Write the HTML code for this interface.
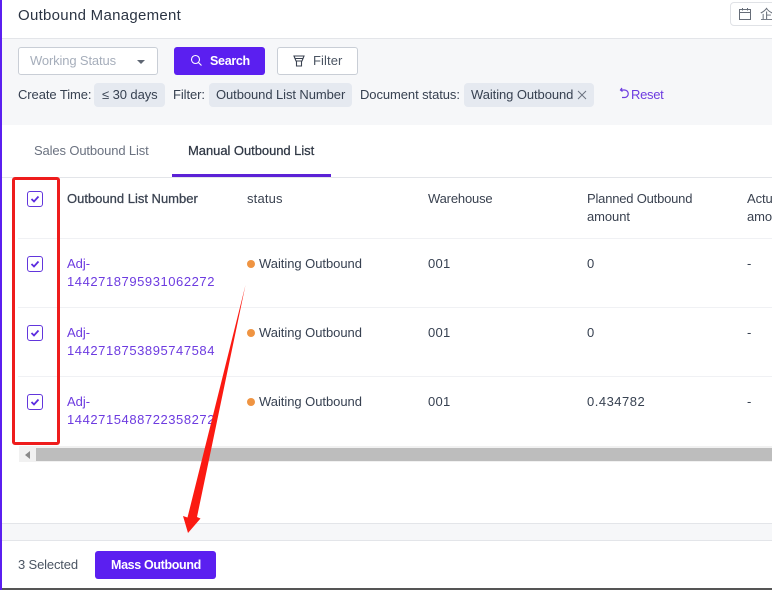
<!DOCTYPE html>
<html><head><meta charset="utf-8">
<style>
html,body{margin:0;padding:0}
body{width:772px;height:590px;overflow:hidden;position:relative;background:#fff;font-family:"Liberation Sans","Noto Sans CJK SC",sans-serif;font-size:13px;color:#374151;letter-spacing:-.08px}
.a{position:absolute;white-space:nowrap;line-height:18px}
.b{position:absolute}
.p{color:#6d3be0}
.m{-webkit-text-stroke:.25px currentColor}
.n{letter-spacing:.25px}
.tag{position:absolute;background:#e5e9f0;border-radius:4px;height:24px;top:83px}
.cb{position:absolute;left:27px;width:14px;height:14px;border:1px solid #6236dc;border-radius:3px;background:#fff}
.cb svg{position:absolute;left:2px;top:2px}
.dot{position:absolute;left:247px;width:8px;height:8px;border-radius:50%;background:#ef9442}
.hl{position:absolute;left:18px;width:754px;height:1px;background:#f0f1f4}
</style></head>
<body>
<!-- page bands -->
<div class="b" style="left:0;top:38px;width:772px;height:87px;background:#f6f7f9;border-top:1px solid #e3e5e9;box-sizing:border-box"></div>
<div class="b" style="left:0;top:0;width:2px;height:590px;background:#5b1ff0;z-index:3"></div>

<!-- header -->
<div class="a" style="left:18px;top:5px;font-size:15px;line-height:21px;color:#2b3443;letter-spacing:.29px">Outbound Management</div>
<div class="b" style="left:730px;top:2px;width:60px;height:24px;border:1px solid #e0e2e6;border-radius:4px;box-sizing:border-box"></div>
<svg class="b" style="left:738px;top:7px" width="14" height="14" viewBox="0 0 14 14" fill="none" stroke="#666d78" stroke-width="1"><rect x="1.5" y="2.5" width="11" height="10"/><path d="M1.5 5.5h11M4.5 1v2.5M9.5 1v2.5"/></svg>
<div class="a" style="left:760px;top:5px;font-size:13px;color:#666d78;font-family:'Noto Sans CJK SC',sans-serif;letter-spacing:0">企</div>

<!-- filter row -->
<div class="b" style="left:18px;top:47px;width:140px;height:28px;background:#fff;border:1px solid #c9ced6;border-radius:3px;box-sizing:border-box"></div>
<div class="a" style="left:30px;top:52px;color:#a6aebb;letter-spacing:-.14px">Working Status</div>
<div class="b" style="left:137px;top:60px;width:0;height:0;border-left:4px solid transparent;border-right:4px solid transparent;border-top:4.5px solid #5e6673"></div>
<div class="b" style="left:174px;top:47px;width:91px;height:28px;background:#5b1ff0;border-radius:3px"></div>
<svg class="b" style="left:190px;top:54px" width="13" height="13" viewBox="0 0 13 13" fill="none" stroke="#fff" stroke-width="1.1"><circle cx="5.5" cy="5.5" r="4"/><path d="M8.5 8.5l3 3"/></svg>
<div class="a" style="left:210px;top:52px;color:#fff;font-weight:bold;font-size:12.5px;letter-spacing:-.3px">Search</div>
<div class="b" style="left:277px;top:47px;width:81px;height:28px;background:#fff;border:1px solid #c9ced6;border-radius:3px;box-sizing:border-box"></div>
<svg class="b" style="left:292px;top:54px" width="14" height="14" viewBox="0 0 14 14" fill="none" stroke="#3a4250" stroke-width="1.1"><path d="M2 2h10L10 7H4ZM3 4.5h8M4.5 7v5h5V7"/></svg>
<div class="a" style="left:313px;top:52px;color:#4b5563;letter-spacing:.1px">Filter</div>

<!-- tags row -->
<div class="a" style="left:18px;top:86px">Create Time:</div>
<div class="tag" style="left:94px;width:71px"></div>
<div class="a" style="left:102px;top:86px">≤ 30 days</div>
<div class="a" style="left:173px;top:86px">Filter:</div>
<div class="tag" style="left:209px;width:143px"></div>
<div class="a" style="left:216px;top:86px">Outbound List Number</div>
<div class="a" style="left:360px;top:86px">Document status:</div>
<div class="tag" style="left:464px;width:130px"></div>
<div class="a" style="left:471px;top:86px">Waiting Outbound</div>
<svg class="b" style="left:577px;top:90px" width="10" height="10" viewBox="0 0 10 10" stroke="#6b7280" stroke-width="1" fill="none"><path d="M1 1l8 8M9 1l-8 8"/></svg>
<svg class="b" style="left:619px;top:87px" width="11" height="13" viewBox="0 0 11 13" fill="none" stroke="#6d3be0" stroke-width="1.2"><path d="M3 1L1.5 3 3.5 4.5M1.5 3h4a3.2 3.2 0 0 1 0 7.5H3"/></svg>
<div class="a p" style="left:631px;top:86px;letter-spacing:-.3px">Reset</div>

<!-- tabs -->
<div class="a" style="left:34px;top:142px;color:#6b7280;letter-spacing:-.13px">Sales Outbound List</div>
<div class="a m" style="left:188px;top:142px;color:#2f3744;letter-spacing:-.05px">Manual Outbound List</div>
<div class="b" style="left:2px;top:177px;width:770px;height:1px;background:#e3e5e9"></div>
<div class="b" style="left:172px;top:174px;width:159px;height:3px;background:#5b21d6"></div>

<!-- table header -->
<div class="a m" style="left:67px;top:190px;letter-spacing:0;color:#3a4250">Outbound List Number</div>
<div class="a" style="left:247px;top:190px;color:#3a4250;letter-spacing:.17px">status</div>
<div class="a" style="left:428px;top:190px;color:#3a4250;letter-spacing:-.17px">Warehouse</div>
<div class="a" style="left:587px;top:190px;color:#3a4250;letter-spacing:-.2px">Planned Outbound</div>
<div class="a" style="left:587px;top:208px;color:#3a4250">amount</div>
<div class="a" style="left:747px;top:190px;color:#3a4250">Actual</div>
<div class="a" style="left:747px;top:208px;color:#3a4250">amount</div>
<div class="hl" style="top:238px"></div>
<div class="hl" style="top:307px"></div>
<div class="hl" style="top:376px"></div>

<!-- checkboxes -->
<div class="cb" style="top:191px"><svg width="10" height="10" viewBox="0 0 10 10" fill="none" stroke="#5b2be0" stroke-width="1.8"><path d="M1.5 5l2.5 2.5L8.5 2.5"/></svg></div>
<div class="cb" style="top:256px"><svg width="10" height="10" viewBox="0 0 10 10" fill="none" stroke="#5b2be0" stroke-width="1.8"><path d="M1.5 5l2.5 2.5L8.5 2.5"/></svg></div>
<div class="cb" style="top:325px"><svg width="10" height="10" viewBox="0 0 10 10" fill="none" stroke="#5b2be0" stroke-width="1.8"><path d="M1.5 5l2.5 2.5L8.5 2.5"/></svg></div>
<div class="cb" style="top:394px"><svg width="10" height="10" viewBox="0 0 10 10" fill="none" stroke="#5b2be0" stroke-width="1.8"><path d="M1.5 5l2.5 2.5L8.5 2.5"/></svg></div>

<!-- row 1 -->
<div class="a p" style="left:67px;top:255px;letter-spacing:0">Adj-</div>
<div class="a p" style="left:67px;top:273px;letter-spacing:.56px">1442718795931062272</div>
<div class="dot" style="top:260px"></div>
<div class="a" style="left:259px;top:255px;letter-spacing:-.04px">Waiting Outbound</div>
<div class="a n" style="left:428px;top:255px">001</div>
<div class="a" style="left:587px;top:255px">0</div>
<div class="a" style="left:747px;top:255px">-</div>
<!-- row 2 -->
<div class="a p" style="left:67px;top:324px;letter-spacing:0">Adj-</div>
<div class="a p" style="left:67px;top:342px;letter-spacing:.56px">1442718753895747584</div>
<div class="dot" style="top:329px"></div>
<div class="a" style="left:259px;top:324px;letter-spacing:-.04px">Waiting Outbound</div>
<div class="a n" style="left:428px;top:324px">001</div>
<div class="a" style="left:587px;top:324px">0</div>
<div class="a" style="left:747px;top:324px">-</div>
<!-- row 3 -->
<div class="a p" style="left:67px;top:393px;letter-spacing:0">Adj-</div>
<div class="a p" style="left:67px;top:411px;letter-spacing:.56px">1442715488722358272</div>
<div class="dot" style="top:398px"></div>
<div class="a" style="left:259px;top:393px;letter-spacing:-.04px">Waiting Outbound</div>
<div class="a n" style="left:428px;top:393px">001</div>
<div class="a" style="left:587px;top:393px;letter-spacing:.5px">0.434782</div>
<div class="a" style="left:747px;top:393px">-</div>

<!-- scrollbar -->
<div class="b" style="left:19px;top:446px;width:753px;height:16px;background:#f1f1f1"></div>
<div class="b" style="left:36px;top:448px;width:736px;height:13px;background:#bdbdbd"></div>
<div class="b" style="left:25px;top:451px;width:0;height:0;border-top:4px solid transparent;border-bottom:4px solid transparent;border-right:5px solid #8a8a8a"></div>

<!-- bottom -->
<div class="b" style="left:2px;top:523px;width:770px;height:18px;background:#f6f7f9;border-top:1px solid #e3e5e9;border-bottom:1px solid #e3e5e9;box-sizing:border-box"></div>
<div class="a" style="left:18px;top:556px;color:#4b5563;letter-spacing:-.15px">3 Selected</div>
<div class="b" style="left:95px;top:551px;width:121px;height:28px;background:#5b1ff0;border-radius:3px"></div>
<div class="a" style="left:111px;top:556px;color:#fff;font-weight:bold;font-size:12.5px;letter-spacing:-.35px">Mass Outbound</div>
<div class="b" style="left:0;top:588px;width:772px;height:2px;background:#555"></div>

<!-- annotations -->
<div class="b" style="left:12px;top:177px;width:48px;height:268px;border:3px solid #ee1c1c;border-radius:3px;box-sizing:border-box;z-index:4"></div>
<svg class="b" style="left:175px;top:280px;z-index:4" width="80" height="260" viewBox="175 280 80 260"><path d="M245.5 285L197 517 200.5 518.5 188 533 183 516 187.5 517.5Z" fill="#fb1a12"/></svg>
</body></html>
